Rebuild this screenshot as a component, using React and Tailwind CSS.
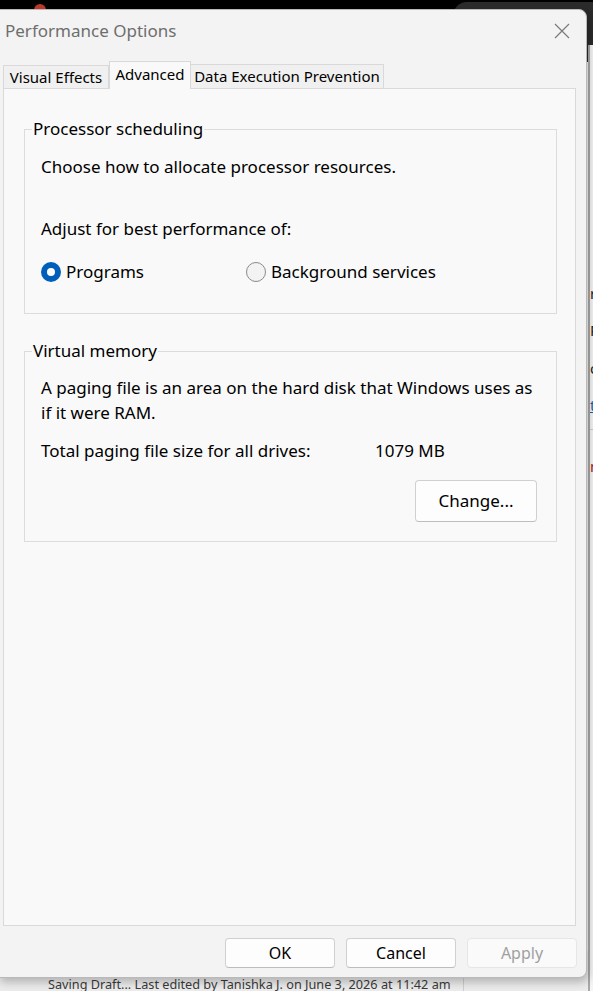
import React from 'react';

const font = { fontFamily: '"Noto Sans", "Open Sans", sans-serif' };

const Radio = ({ checked }) =>
  checked ? (
    <span className="flex h-[20px] w-[20px] items-center justify-center rounded-full bg-[#005fb8]">
      <span className="h-[8px] w-[8px] rounded-full bg-white" />
    </span>
  ) : (
    <span className="h-[20px] w-[20px] rounded-full border border-[#8a8a8a] bg-[#f3f3f3]" />
  );

const Group = ({ title, children, className }) => (
  <fieldset className={`ml-[20px] w-[533px] border border-[#dcdcdc] pl-[16px] ${className}`}>
    <legend className="ml-[-9px] px-[1px] text-[17px] leading-[24px] text-black">{title}</legend>
    {children}
  </fieldset>
);

const DialogButton = ({ children, disabled }) => (
  <button
    className={`h-[30px] w-[110px] rounded-[4px] border text-[16px] ${
      disabled
        ? 'border-[#e6e6e6] bg-[#fafafa] text-[#a0a0a0]'
        : 'border-[#d0d0d0] border-b-[#bcbcbc] bg-[#fdfdfd] text-black'
    }`}
  >
    {children}
  </button>
);

export default function App() {
  return (
    <div className="relative h-[991px] w-[593px] overflow-hidden bg-[#f7f7f7]" style={font}>
      {/* page behind the dialog */}
      <div className="flex h-full flex-col">
        <div className="flex h-[45px] bg-black">
          <div className="ml-[34px] mt-[4px] h-[12px] w-[12px] rounded-full bg-[#c0392b]" />
          <div className="ml-auto mt-[2px] h-[60px] w-[140px] rounded-tl-[14px] bg-[#2b2b2b]" />
        </div>
        <div className="flex flex-1">
          <div className="flex w-[588px] flex-col justify-end">
            <div className="flex h-[40px] items-end bg-[#ececec]">
              <div className="mb-[-2px] w-[464px] overflow-hidden border-r border-[#cfcfcf] pl-[48px] text-[12.7px] leading-[18px] whitespace-nowrap text-[#3a3a3a]">
                Saving Draft... Last edited by Tanishka J. on June 3, 2026 at 11:42 am
              </div>
            </div>
          </div>
          <div className="flex-1 overflow-hidden border-l-[2px] border-[#a9a9a9] bg-[#f5f5f5] text-[15px] leading-[20px] whitespace-nowrap text-[#222]">
            <div className="mt-[238px]">rameters</div>
            <div className="mt-[17px]">Priority</div>
            <div className="mt-[18px]">occurs</div>
            <div className="mt-[17px] text-[#1a5fb4] underline">type</div>
            <div className="mt-[14px] border-t border-[#d0d0d0]" />
            <div className="mt-[26px] text-[#b02020]">none</div>
          </div>
        </div>
      </div>

      {/* dialog window */}
      <div className="absolute left-[-2px] top-[9px] flex h-[969px] w-[589px] flex-col rounded-r-[8px] border border-[#b9b9b9] bg-[#f3f3f3] shadow-[2px_4px_10px_rgba(0,0,0,0.25)]">
        <div className="flex h-[52px] items-start">
          <div className="ml-[6px] mt-[9px] text-[17px] leading-[24px] text-[#6e6e6e]">Performance Options</div>
          <svg className="ml-auto mr-[16px] mt-[13px]" width="16" height="16" viewBox="0 0 16 16">
            <path d="M1 1 L15 15 M15 1 L1 15" stroke="#7a7a7a" strokeWidth="1.2" fill="none" />
          </svg>
        </div>

        <div className="flex h-[26px] items-end pl-[4px] text-[15px] text-black">
          <div className="flex h-[23px] w-[106px] items-center justify-center border border-b-0 border-[#d9d9d9] bg-[#f0f0f0]">
            Visual Effects
          </div>
          <div className="relative z-10 mb-[-1px] flex h-[28px] w-[82px] items-start justify-center border border-b-0 border-[#d9d9d9] bg-[#f9f9f9] pt-[1px]">
            Advanced
          </div>
          <div className="flex h-[24px] w-[193px] items-center justify-center border border-b-0 border-l-0 border-[#d9d9d9] bg-[#f0f0f0]">
            Data Execution Prevention
          </div>
        </div>

        <div className="ml-[4px] mr-[10px] h-[838px] border border-[#d9d9d9] bg-[#f9f9f9] text-[17px] text-black">
          <Group title="Processor scheduling" className="mt-[28px] pb-[29px]">
            <div className="mt-[14px] leading-[24px]">Choose how to allocate processor resources.</div>
            <div className="mt-[38px] leading-[24px]">Adjust for best performance of:</div>
            <div className="mt-[19px] flex h-[24px] items-center">
              <div className="flex w-[205px] items-center gap-[5px]">
                <Radio checked />
                <span>Programs</span>
              </div>
              <div className="flex items-center gap-[5px]">
                <Radio />
                <span>Background services</span>
              </div>
            </div>
          </Group>

          <Group title="Virtual memory" className="mt-[25px] pb-[19px]">
            <div className="mt-[12px] pr-[16px] leading-[25px]">
              A paging file is an area on the hard disk that Windows uses as if it were RAM.
            </div>
            <div className="mt-[14px] flex leading-[24px]">
              <span className="w-[334px]">Total paging file size for all drives:</span>
              <span>1079 MB</span>
            </div>
            <div className="mt-[17px] flex justify-end pr-[19px]">
              <button className="h-[42px] w-[122px] rounded-[4px] border border-[#d0d0d0] border-b-[#bdbdbd] bg-[#fdfdfd] text-[17px]">
                Change...
              </button>
            </div>
          </Group>
        </div>

        <div className="mt-[12px] flex justify-end gap-[11px] pr-[9px]">
          <DialogButton>OK</DialogButton>
          <DialogButton>Cancel</DialogButton>
          <DialogButton disabled>Apply</DialogButton>
        </div>
      </div>
    </div>
  );
}
